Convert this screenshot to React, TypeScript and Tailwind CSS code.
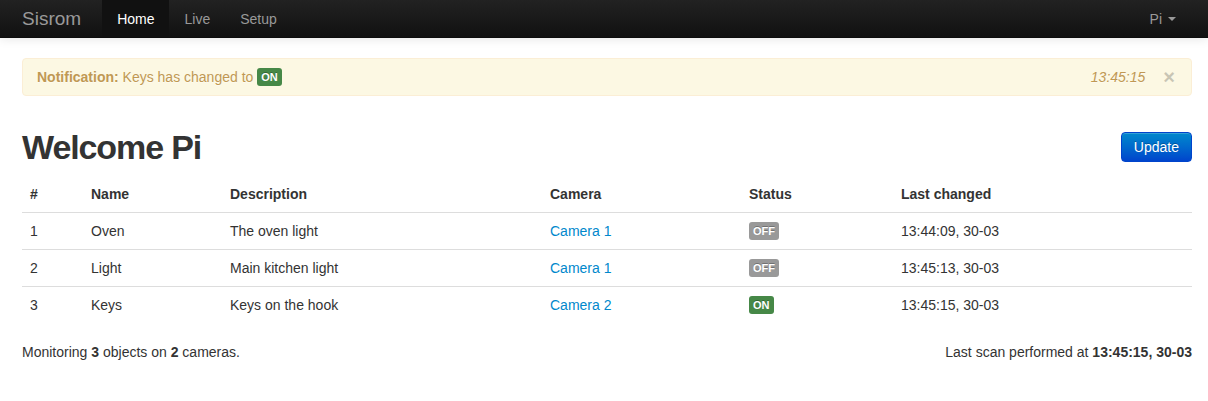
const rows = [
  { id: 1, name: "Oven", description: "The oven light", camera: "Camera 1", on: false, changed: "13:44:09, 30-03" },
  { id: 2, name: "Light", description: "Main kitchen light", camera: "Camera 1", on: false, changed: "13:45:13, 30-03" },
  { id: 3, name: "Keys", description: "Keys on the hook", camera: "Camera 2", on: true, changed: "13:45:15, 30-03" },
];

function Label({ on }: { on: boolean }) {
  return (
    <span
      className={`inline-block rounded-[3px] px-1 py-[2px] text-[11px] leading-[14px] font-bold text-white align-[1px] [text-shadow:0_-1px_0_rgba(0,0,0,0.25)] ${
        on ? "bg-[#468847]" : "bg-[#999999]"
      }`}
    >
      {on ? "ON" : "OFF"}
    </span>
  );
}

export default function App() {
  return (
    <div className="min-h-[401px] bg-white text-[14px] leading-5 text-[#333] font-['Liberation_Sans',Arial,sans-serif]">
      <nav className="h-[38px] bg-gradient-to-b from-[#222222] to-[#111111] border-b border-[#0d0d0d] shadow-[0_1px_10px_rgba(0,0,0,0.1)]">
        <div className="flex items-center h-full pl-[22px] pr-[16px]">
          <span className="text-[19px] leading-5 text-[#999] pr-[21px]">Sisrom</span>
          <ul className="flex h-full">
            <li className="px-[15px] h-full flex items-center bg-[#111] text-white">Home</li>
            <li className="px-[15px] h-full flex items-center text-[#999]">Live</li>
            <li className="px-[15px] h-full flex items-center text-[#999]">Setup</li>
          </ul>
          <div className="ml-auto flex items-center gap-[6px] pr-[16px] text-[#999]">
            Pi
            <span className="w-0 h-0 border-x-[4px] border-x-transparent border-t-[4px] border-t-[#999] mt-[1px]" />
          </div>
        </div>
      </nav>

      <div className="pl-[22px] pr-[16px] pt-5">
        <div className="flex items-center h-[38px] rounded-[4px] border border-[#fbeed5] bg-[#fcf8e3] pl-[14px] pr-[14px] text-[#c09853] [text-shadow:0_1px_0_rgba(255,255,255,0.5)]">
          <span>
            <strong className="font-bold">Notification:</strong> Keys has changed to <Label on />
          </span>
          <em className="ml-auto italic">13:45:15</em>
          <span className="ml-[18px] mr-[2px] text-[20px] leading-5 font-bold text-black opacity-20">×</span>
        </div>

        <div className="flex items-center justify-between mt-[31px] h-10">
          <h1 className="text-[34px] leading-10 font-bold tracking-[-1.1px] text-[#333]">Welcome Pi</h1>
          <button className="h-[30px] px-3 rounded-[4px] border border-[#0044cc] bg-gradient-to-b from-[#0088cc] to-[#0044cc] text-white leading-5 [text-shadow:0_-1px_0_rgba(0,0,0,0.25)] shadow-[inset_0_1px_0_rgba(255,255,255,0.2)]">
            Update
          </button>
        </div>

        <table className="w-full mt-[9px] border-collapse text-left">
          <thead>
            <tr>
              <th className="w-[61px] p-2 font-bold">#</th>
              <th className="w-[139px] p-2 font-bold">Name</th>
              <th className="w-[320px] p-2 font-bold">Description</th>
              <th className="w-[199px] p-2 font-bold">Camera</th>
              <th className="w-[152px] p-2 font-bold">Status</th>
              <th className="p-2 font-bold">Last changed</th>
            </tr>
          </thead>
          <tbody>
            {rows.map((r) => (
              <tr key={r.id} className="border-t border-[#dddddd]">
                <td className="p-2">{r.id}</td>
                <td className="p-2">{r.name}</td>
                <td className="p-2">{r.description}</td>
                <td className="p-2 text-[#0088cc]">{r.camera}</td>
                <td className="p-2">
                  <Label on={r.on} />
                </td>
                <td className="p-2">{r.changed}</td>
              </tr>
            ))}
          </tbody>
        </table>

        <div className="flex justify-between mt-[19px]">
          <p>
            Monitoring <strong>3</strong> objects on <strong>2</strong> cameras.
          </p>
          <p>
            Last scan performed at <strong>13:45:15, 30-03</strong>
          </p>
        </div>
      </div>
    </div>
  );
}
